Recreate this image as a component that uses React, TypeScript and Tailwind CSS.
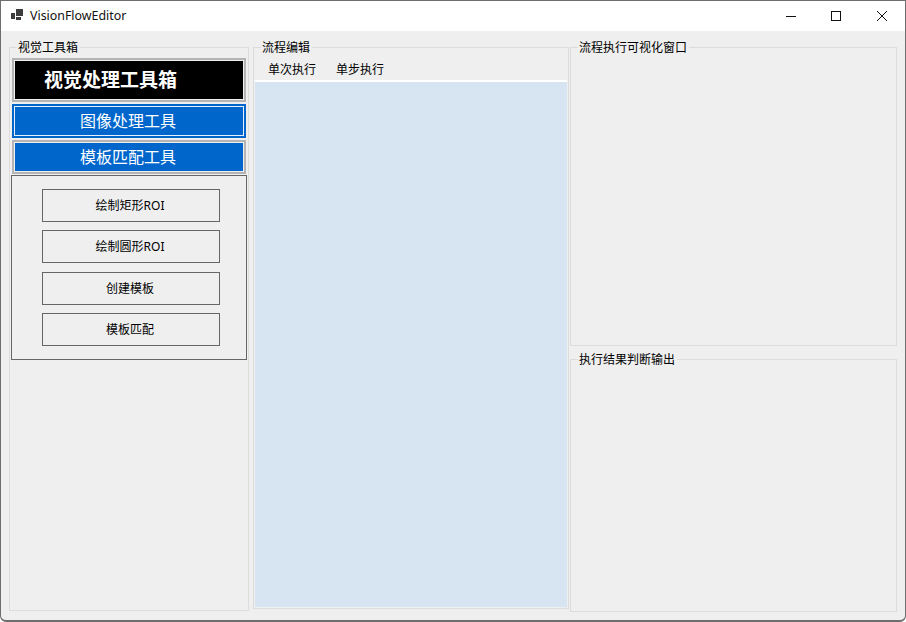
import React from "react";

function Legend({ children }: { children: React.ReactNode }) {
  return (
    <span className="absolute left-[7px] top-[-8px] bg-[#efefef] pl-[1px] pr-[2px] text-[12px] leading-[16px] text-black">
      {children}
    </span>
  );
}

function RoiButton({ label, mt }: { label: string; mt: string }) {
  return (
    <div className={`${mt} ml-[30px] flex h-[33px] w-[178px] items-center justify-center border border-[#666666] pr-[2px] text-[12px] text-black`}>
      {label}
    </div>
  );
}

export default function App() {
  return (
    <div className="flex h-[622px] w-[906px] flex-col overflow-hidden rounded-b-[6px] border-t border-b-2 border-l border-r border-[#6e6e6e] bg-[#efefef] [font-family:'Noto_Sans','Noto_Sans_CJK_SC',sans-serif]">
      <div className="flex h-[30px] shrink-0 items-center bg-white">
        <svg width="14" height="14" viewBox="0 0 14 14" className="ml-[10px]">
          <rect x="0" y="4" width="4" height="6" fill="#3c3c3c" />
          <rect x="5" y="0" width="7" height="7" fill="#3c3c3c" />
          <rect x="5" y="8" width="5" height="3" fill="#3c3c3c" />
        </svg>
        <span className="ml-[5px] text-[12.4px] text-[#111111]">VisionFlowEditor</span>
        <div className="ml-auto flex items-center">
          <svg width="12" height="12" viewBox="0 0 12 12" className="mr-[33px]">
            <path d="M1 6.5H11" stroke="#111" strokeWidth="1" />
          </svg>
          <svg width="12" height="12" viewBox="0 0 12 12" className="mr-[34px]">
            <rect x="1.5" y="1.5" width="9" height="9" fill="none" stroke="#111" strokeWidth="1" />
          </svg>
          <svg width="12" height="12" viewBox="0 0 12 12" className="mr-[17px]">
            <path d="M1 1L11 11M11 1L1 11" stroke="#111" strokeWidth="1" />
          </svg>
        </div>
      </div>

      <div className="flex min-h-0 flex-1 pl-[8px] pt-[16px]">
        <div className="relative h-[564px] w-[240px] shrink-0 border border-[#dcdcdc] px-[2px] pt-[10px]">
          <Legend>视觉工具箱</Legend>
          <div className="h-[44px] border-2 border-[#b4b4b4] bg-[#efefef] p-[1px]">
            <div className="flex h-full items-center bg-black pl-[29px] text-[19px] font-bold text-white">
              视觉处理工具箱
            </div>
          </div>
          <div className="mt-[2px] flex h-[34px] items-center justify-center border-2 border-[#0066cc] bg-[#0066cc] pr-[2px] text-[16px] text-white outline outline-1 -outline-offset-3 outline-[#e4f0fb]">
            图像处理工具
          </div>
          <div className="mt-[2px] h-[34px] border-2 border-[#b4b4b4] bg-[#efefef] p-[1px]">
            <div className="flex h-full items-center justify-center bg-[#0066cc] pr-[2px] text-[16px] text-white">
              模板匹配工具
            </div>
          </div>
          <div className="ml-[-1px] mt-[1px] h-[185px] w-[236px] border border-[#666666] pt-[13px]">
            <RoiButton label="绘制矩形ROI" mt="" />
            <RoiButton label="绘制圆形ROI" mt="mt-[8px]" />
            <RoiButton label="创建模板" mt="mt-[9px]" />
            <RoiButton label="模板匹配" mt="mt-[8px]" />
          </div>
        </div>

        <div className="relative ml-[4px] flex h-[562px] w-[316px] shrink-0 flex-col border border-[#dcdcdc] px-[1px] pb-[1px]">
          <Legend>流程编辑</Legend>
          <div className="flex h-[32px] items-center gap-[20px] pl-[13px] pt-[11px] text-[12px] text-black">
            <span>单次执行</span>
            <span>单步执行</span>
          </div>
          <div className="flex-1 border-t-2 border-white bg-[#d7e4f2]" />
        </div>

        <div className="ml-[1px] flex w-[327px] shrink-0 flex-col">
          <div className="relative h-[299px] border border-[#dcdcdc]">
            <Legend>流程执行可视化窗口</Legend>
          </div>
          <div className="relative mt-[13px] h-[253px] border border-[#dcdcdc]">
            <Legend>执行结果判断输出</Legend>
          </div>
        </div>
      </div>
    </div>
  );
}
